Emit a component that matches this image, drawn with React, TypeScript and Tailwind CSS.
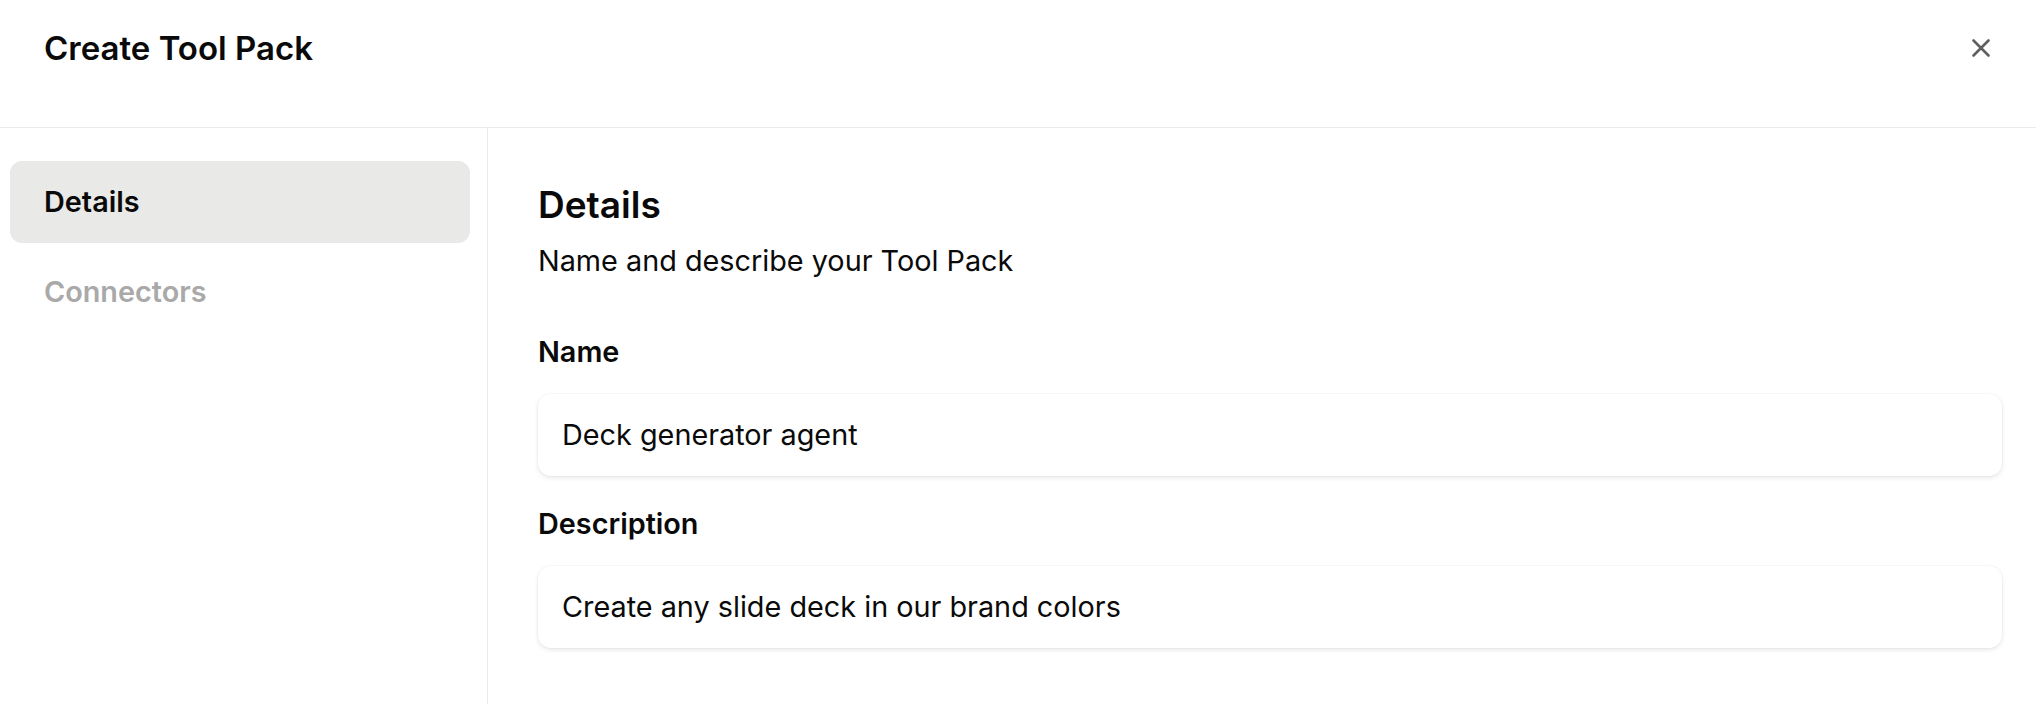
import React from 'react';
import { X } from 'lucide-react';

// sidebar steps
const steps = [
  { id: 'details', label: 'Details', active: true },
  { id: 'connectors', label: 'Connectors', active: false },
];

const Field: React.FC<{ label: string; value: string; className?: string }> = ({ label, value, className }) => (
  <div className={className}>
    <div className="text-[28.8px] leading-[40px] font-semibold text-[#0a0a0a]">{label}</div>
    <div className="mt-[22px] h-[82px] flex items-center px-[24px] rounded-[13px] bg-white shadow-[0_0_0_1px_rgba(0,0,0,0.025),0_2px_5px_rgba(0,0,0,0.09)] text-[28.8px] text-[#0a0a0a]">
      {value}
    </div>
  </div>
);

export default function App() {
  return (
    <div className="w-[2036px] h-[704px] bg-white overflow-hidden font-['Inter',sans-serif] text-[#0a0a0a]">
      {/* header */}
      <div className="h-[128px] border-b border-[#ebebeb] flex items-start justify-between pl-[44px] pr-[40px] pt-[28px]">
        <h1 className="text-[33px] leading-[40px] font-semibold">Create Tool Pack</h1>
        <button className="mt-[5px] text-[#5f5f5f]">
          <X size={30} strokeWidth={2.1} />
        </button>
      </div>

      <div className="flex h-[576px]">
        {/* sidebar */}
        <aside className="w-[488px] shrink-0 border-r border-[#ebebeb] pl-[10px] pr-[17px] pt-[33px] flex flex-col gap-[8px]">
          {steps.map((s) => (
            <div
              key={s.id}
              className={
                s.active
                  ? 'h-[82px] rounded-[12px] bg-[#e9e9e8] flex items-center pl-[34px] text-[28.8px] font-semibold text-[#0a0a0a]'
                  : 'h-[82px] rounded-[12px] flex items-center pl-[34px] text-[28.8px] font-semibold text-[#a9a9a9]'
              }
            >
              {s.label}
            </div>
          ))}
        </aside>

        {/* main */}
        <main className="flex-1 pl-[50px] pr-[34px] pt-[55px]">
          <h2 className="text-[37px] leading-[44px] font-semibold">Details</h2>
          <p className="mt-[14px] text-[28.8px] leading-[40px]">Name and describe your Tool Pack</p>

          <Field label="Name" value="Deck generator agent" className="mt-[51px]" />
          <Field label="Description" value="Create any slide deck in our brand colors" className="mt-[28px]" />
        </main>
      </div>
    </div>
  );
}
